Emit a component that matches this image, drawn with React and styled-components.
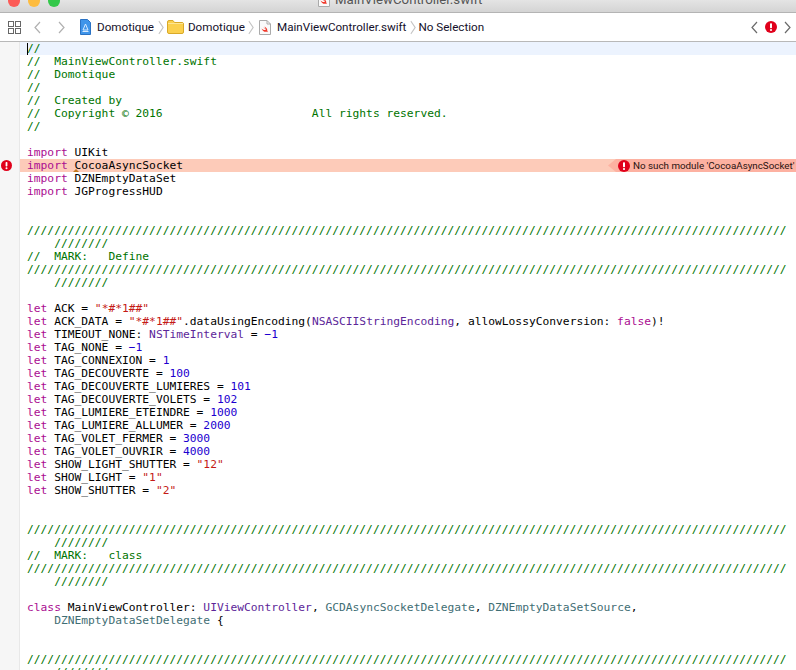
import React from 'react';
import styled, { createGlobalStyle } from 'styled-components';

const Global = createGlobalStyle`
  html, body {
    margin: 0;
    padding: 0;
    height: 100%;
    background: #fff;
    overflow: hidden;
  }
`;

const SLASHES = '/'.repeat(112);
const SLASHES_TAIL = '/'.repeat(8);

const c = (t) => ({ k: 'comment', t });
const kw = (t) => ({ k: 'keyword', t });
const str = (t) => ({ k: 'string', t });
const num = (t) => ({ k: 'number', t });
const sys = (t) => ({ k: 'system', t });
const own = (t) => ({ k: 'project', t });
const p = (t) => ({ k: 'plain', t });

const letNum = (name, value) => [kw('let'), p(` ${name} = `), num(value)];
const letStr = (name, value) => [kw('let'), p(` ${name} = `), str(`"${value}"`)];

const rule = [[c(SLASHES)], [c(`    ${SLASHES_TAIL}`)]];

const LINES = [
  [c('//')],
  [c('//  MainViewController.swift')],
  [c('//  Domotique')],
  [c('//')],
  [c('//  Created by')],
  [c('//  Copyright © 2016                      All rights reserved.')],
  [c('//')],
  [],
  [kw('import'), p(' UIKit')],
  [kw('import'), p(' CocoaAsyncSocket')],
  [kw('import'), p(' DZNEmptyDataSet')],
  [kw('import'), p(' JGProgressHUD')],
  [],
  [],
  ...rule,
  [c('//  MARK:   Define')],
  ...rule,
  [],
  letStr('ACK', '*#*1##'),
  [
    kw('let'),
    p(' ACK_DATA = '),
    str('"*#*1##"'),
    p('.dataUsingEncoding('),
    sys('NSASCIIStringEncoding'),
    p(', allowLossyConversion: '),
    kw('false'),
    p(')!'),
  ],
  [kw('let'), p(' TIMEOUT_NONE: '), sys('NSTimeInterval'), p(' = '), num('−1')],
  letNum('TAG_NONE', '−1'),
  letNum('TAG_CONNEXION', '1'),
  letNum('TAG_DECOUVERTE', '100'),
  letNum('TAG_DECOUVERTE_LUMIERES', '101'),
  letNum('TAG_DECOUVERTE_VOLETS', '102'),
  letNum('TAG_LUMIERE_ETEINDRE', '1000'),
  letNum('TAG_LUMIERE_ALLUMER', '2000'),
  letNum('TAG_VOLET_FERMER', '3000'),
  letNum('TAG_VOLET_OUVRIR', '4000'),
  letStr('SHOW_LIGHT_SHUTTER', '12'),
  letStr('SHOW_LIGHT', '1'),
  letStr('SHOW_SHUTTER', '2'),
  [],
  [],
  ...rule,
  [c('//  MARK:   class')],
  ...rule,
  [],
  [
    kw('class'),
    p(' MainViewController: '),
    sys('UIViewController'),
    p(', '),
    own('GCDAsyncSocketDelegate'),
    p(', '),
    own('DZNEmptyDataSetSource'),
    p(','),
  ],
  [p('    '), own('DZNEmptyDataSetDelegate'), p(' {')],
  [],
  [],
  ...rule,
];

const ERROR_LINE = 9;

const tokenColors = {
  comment: '#007400',
  keyword: '#aa0d91',
  string: '#c41a16',
  number: '#1c00cf',
  system: '#5c2699',
  project: '#3f6e74',
  plain: '#000',
};

const Window = styled.div`
  width: 796px;
  height: 670px;
  overflow: hidden;
  display: flex;
  flex-direction: column;
  font-family: Roboto, "Liberation Sans", sans-serif;
`;

const TitleBar = styled.div`
  height: 7px;
  flex: none;
  display: flex;
  align-items: flex-end;
  padding: 0 0 5px 8px;
  overflow: hidden;
  background: linear-gradient(#e4e4e4, #d4d4d4);
  border-bottom: 1px solid #b4b4b4;
`;

const Light = styled.span`
  width: 12px;
  height: 12px;
  flex: none;
  border-radius: 50%;
  margin-right: 8px;
  background: ${(props) => props.$color};
`;

const WindowTitle = styled.div`
  display: flex;
  align-items: center;
  gap: 5px;
  margin-left: 250px;
  font-size: 13.25px;
  line-height: 14px;
  color: #555;
  flex: none;
`;

const JumpBar = styled.div`
  height: 28px;
  flex: none;
  display: flex;
  align-items: center;
  padding: 0 5px 0 8px;
  background: #fff;
  border-bottom: 1px solid #b8b8b8;
`;

const NavGroup = styled.div`
  display: flex;
  align-items: center;
  gap: ${(props) => props.$gap}px;
  margin-left: ${(props) => props.$left || 0}px;
`;

const Crumb = styled.span`
  display: flex;
  align-items: center;
  gap: ${(props) => props.$gap}px;
  font-size: 11.65px;
  color: #14102a;
  white-space: nowrap;
  margin-left: ${(props) => props.$left || 0}px;
`;

const Spacer = styled.div`
  flex: 1;
`;

const Editor = styled.div`
  flex: 1;
  overflow: hidden;
  font-family: "DejaVu Sans Mono", "Liberation Mono", monospace;
  font-size: 11.27px;
  line-height: 13px;
`;

const Row = styled.div`
  display: flex;
  height: 13px;
`;

const Gutter = styled.div`
  width: 20px;
  flex: none;
  box-sizing: border-box;
  display: flex;
  align-items: center;
  padding-left: 1px;
  background: #f6f6f6;
  border-right: 1px solid #e8e8e8;
`;

const Code = styled.div`
  position: relative;
  flex: 1;
  padding-left: 7px;
  white-space: pre;
  overflow: hidden;
  background: ${(props) =>
    props.$error ? '#fdcbb9' : props.$current ? '#ecf3fe' : '#fff'};
`;

const Token = styled.span`
  color: ${(props) => tokenColors[props.$kind]};
`;

const Caret = styled.span`
  position: absolute;
  left: 7px;
  top: 1px;
  width: 1px;
  height: 12px;
  background: #000;
`;

const FixMark = styled.span`
  position: absolute;
  left: 53px;
  bottom: 0;
  width: 0;
  height: 0;
  border-left: 3px solid transparent;
  border-right: 3px solid transparent;
  border-bottom: 3px solid #c47a1e;
`;

const IssueBadge = styled.div`
  position: absolute;
  top: 0;
  right: 0;
  height: 100%;
  width: 188px;
  display: flex;
  align-items: center;
  gap: 3px;
  padding-left: 10px;
  box-sizing: border-box;
  background: #fdb1a1;
  clip-path: polygon(0 50%, 8px 0, 100% 0, 100% 100%, 8px 100%);
  font-family: Roboto, "Liberation Sans", sans-serif;
  font-size: 9.8px;
  color: #2a1210;
`;

const Chevron = ({ dir = 'right', color = '#7a7a7a', w = 7, h = 13 }) => (
  <svg width={w} height={h} viewBox="0 0 7 13" preserveAspectRatio="none" fill="none">
    <path
      d={dir === 'right' ? 'M1 1l5 5.5L1 12' : 'M6 1L1 6.5 6 12'}
      stroke={color}
      strokeWidth="1.2"
    />
  </svg>
);

const ErrorIcon = ({ size = 12 }) => (
  <svg width={size} height={size} viewBox="0 0 12 12" style={{ flex: 'none' }}>
    <circle cx="6" cy="6" r="6" fill="#e0001b" />
    <rect x="5" y="2.2" width="2" height="5" rx="0.8" fill="#fff" />
    <circle cx="6" cy="9" r="1.1" fill="#fff" />
  </svg>
);

const RelatedIcon = () => (
  <svg width="13" height="13" viewBox="0 0 13 13" fill="none" stroke="#666" strokeWidth="1">
    <rect x="0.5" y="0.5" width="5" height="5" />
    <rect x="7.5" y="0.5" width="5" height="5" />
    <rect x="0.5" y="7.5" width="5" height="5" />
    <rect x="7.5" y="7.5" width="5" height="5" />
  </svg>
);

const ProjectIcon = () => (
  <svg width="11" height="16" viewBox="0 0 11 16">
    <path d="M0.5 0.5H7.5L10.5 3.5V15.5H0.5Z" fill="#3f95ea" stroke="#2a72c4" />
    <path d="M5.5 5L8 11H3Z" fill="none" stroke="#d7eaff" strokeWidth="1" />
    <path d="M2.5 12.5H8.5" stroke="#d7eaff" />
  </svg>
);

const FolderIcon = () => (
  <svg width="17" height="14" viewBox="0 0 17 14">
    <path d="M0.5 2Q0.5 0.5 2 0.5H6L7.5 2.5H15Q16.5 2.5 16.5 4V12Q16.5 13.5 15 13.5H2Q0.5 13.5 0.5 12Z" fill="#fbd04e" stroke="#d9a928" />
    <path d="M1 3.5H16" stroke="#fde594" />
  </svg>
);

const SwiftFileIcon = () => (
  <svg width="12" height="15" viewBox="0 0 12 15" style={{ flex: 'none' }}>
    <path d="M0.5 0.5H8L11.5 4V14.5H0.5Z" fill="#fafafa" stroke="#aaa" />
    <path d="M8 0.5V4H11.5" fill="none" stroke="#aaa" />
    <path d="M2.5 8.5C4.5 10.2 6 10.4 7 9.8C5.6 8.6 4.6 7.6 4 6.8C5.2 7.8 6.4 8.6 7 8.9C6.3 8 5.8 7.2 5.6 6.6C7 7.8 8.6 8.6 8.2 10.6C8.8 11.4 8.8 12 8.6 12.2C8.2 11.6 7.6 11.6 7 11.8C5.4 12.2 3.6 10.8 2.5 8.5Z" fill="#f0392b" />
  </svg>
);

const App = () => {
  return (
    <Window>
      <Global />
      <TitleBar>
        <Light $color="#fc5b57" />
        <Light $color="#fdbc40" />
        <Light $color="#34c84a" />
        <WindowTitle>
          <SwiftFileIcon />
          MainViewController.swift
        </WindowTitle>
      </TitleBar>
      <JumpBar>
        <RelatedIcon />
        <NavGroup $gap={17} $left={13}>
          <Chevron dir="left" color="#b0b0b0" />
          <Chevron color="#b0b0b0" />
        </NavGroup>
        <Crumb $gap={6} $left={15}>
          <ProjectIcon />
          Domotique
        </Crumb>
        <Crumb $gap={0} $left={4}>
          <Chevron color="#c4c4c4" w={6} h={15} />
        </Crumb>
        <Crumb $gap={4} $left={3}>
          <FolderIcon />
          Domotique
        </Crumb>
        <Crumb $gap={0} $left={3}>
          <Chevron color="#c4c4c4" w={6} h={15} />
        </Crumb>
        <Crumb $gap={6} $left={5}>
          <SwiftFileIcon />
          MainViewController.swift
        </Crumb>
        <Crumb $gap={0} $left={4}>
          <Chevron color="#c4c4c4" w={6} h={15} />
        </Crumb>
        <Crumb $gap={0} $left={2}>
          No Selection
        </Crumb>
        <Spacer />
        <NavGroup $gap={7}>
          <Chevron dir="left" color="#6a6a6a" />
          <ErrorIcon />
          <Chevron color="#6a6a6a" />
        </NavGroup>
      </JumpBar>
      <Editor>
        {LINES.map((tokens, i) => (
          <Row key={i}>
            <Gutter>{i === ERROR_LINE && <ErrorIcon size={11} />}</Gutter>
            <Code $current={i === 0} $error={i === ERROR_LINE}>
              {i === 0 && <Caret />}
              {tokens.length === 0
                ? ' '
                : tokens.map((tok, j) => (
                    <Token key={j} $kind={tok.k}>
                      {tok.t}
                    </Token>
                  ))}
              {i === ERROR_LINE && (
                <>
                  <FixMark />
                  <IssueBadge>
                    <ErrorIcon />
                    No such module 'CocoaAsyncSocket'
                  </IssueBadge>
                </>
              )}
            </Code>
          </Row>
        ))}
      </Editor>
    </Window>
  );
};

export default App;
